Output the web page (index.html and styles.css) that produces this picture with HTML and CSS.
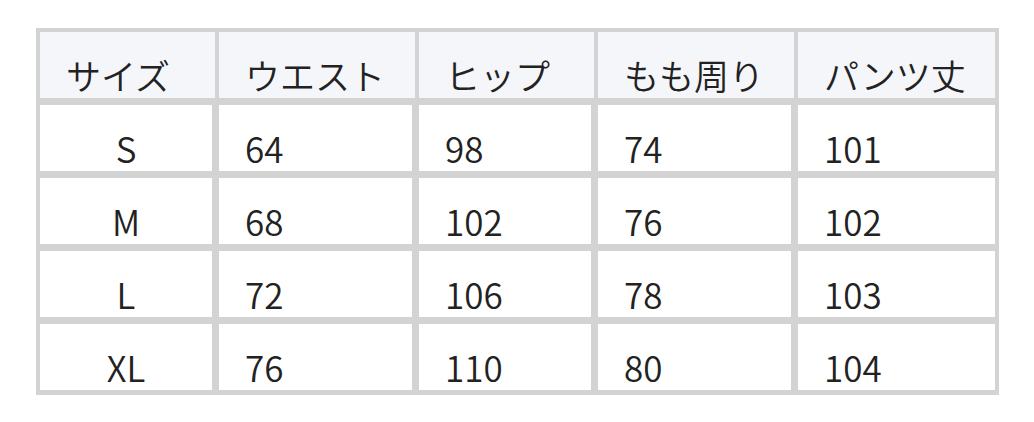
FILE: index.html
```html
<!DOCTYPE html>
<html lang="ja">
<head>
<meta charset="utf-8">
<link rel="stylesheet" href="styles.css">
</head>
<body>
<table class="size-table">
  <thead>
    <tr>
      <th class="c1">サイズ</th>
      <th class="c2">ウエスト</th>
      <th class="c3">ヒップ</th>
      <th class="c4">もも周り</th>
      <th class="c5">パンツ丈</th>
    </tr>
  </thead>
  <tbody>
    <tr><td class="center">S</td><td>64</td><td>98</td><td>74</td><td>101</td></tr>
    <tr><td class="center">M</td><td>68</td><td>102</td><td>76</td><td>102</td></tr>
    <tr><td class="center">L</td><td>72</td><td>106</td><td>78</td><td>103</td></tr>
    <tr><td class="center">XL</td><td>76</td><td>110</td><td>80</td><td>104</td></tr>
  </tbody>
</table>
</body>
</html>
```
FILE: styles.css
```css
html, body {
  margin: 0;
  padding: 0;
  background: #ffffff;
}
body {
  padding: 28px 0 0 36px;
  font-family: "Noto Sans CJK JP", "Noto Sans", sans-serif;
  color: #222222;
}
.size-table {
  border-collapse: separate;
  border-spacing: 0;
  border-top: 4px solid #d3d3d3;
  border-left: 4px solid #d3d3d3;
  table-layout: fixed;
  width: 963px;
}
.size-table th,
.size-table td {
  padding: 0 0 0 26px;
  text-align: left;
  vertical-align: middle;
  font-size: 35px;
  font-weight: 350;
  line-height: 40px;
  box-sizing: border-box;
}
.size-table th {
  background: #f5f6fa;
  height: 73px;
  border-right: 4px solid #d3d3d3;
  border-bottom: 7px solid #d3d3d3;
  padding-top: 19px;
}
.size-table td {
  height: 73px;
  border-right: 7px solid #d3d3d3;
  border-bottom: 7px solid #d3d3d3;
  padding-top: 20px;
}
.size-table td:last-child {
  border-right: 4px solid #d3d3d3;
}
.size-table tbody tr:last-child td {
  border-bottom: 5px solid #d3d3d3;
  height: 71px;
}
.size-table td.center {
  text-align: center;
  padding-left: 0;
}
.c1 { width: 179px; }
.c2 { width: 200px; }
.c3 { width: 179px; }
.c4 { width: 200px; }
.c5 { width: 201px; }
```
